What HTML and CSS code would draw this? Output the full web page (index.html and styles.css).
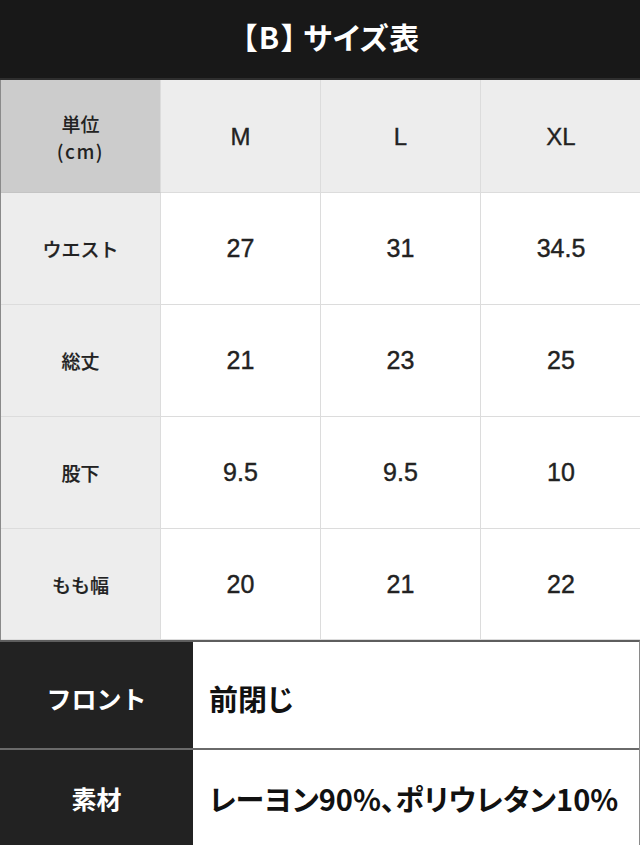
FILE: index.html
```html
<!DOCTYPE html>
<html lang="ja">
<head>
<meta charset="utf-8">
<title>サイズ表</title>
<link rel="stylesheet" href="styles.css">
</head>
<body>
<div class="page">
  <header class="title-bar"><h1 class="title"><span class="tag">【B】</span>サイズ表</h1></header>
  <div class="size-table">
    <div class="cell unit"><div>単位<br><span class="cm">(cm)</span></div></div>
    <div class="cell head">M</div>
    <div class="cell head">L</div>
    <div class="cell head">XL</div>

    <div class="cell label">ウエスト</div>
    <div class="cell num">27</div>
    <div class="cell num">31</div>
    <div class="cell num">34.5</div>

    <div class="cell label">総丈</div>
    <div class="cell num">21</div>
    <div class="cell num">23</div>
    <div class="cell num">25</div>

    <div class="cell label">股下</div>
    <div class="cell num">9.5</div>
    <div class="cell num">9.5</div>
    <div class="cell num">10</div>

    <div class="cell label">もも幅</div>
    <div class="cell num">20</div>
    <div class="cell num">21</div>
    <div class="cell num">22</div>
  </div>
  <div class="info">
    <div class="info-row first">
      <div class="info-key">フロント</div>
      <div class="info-val">前閉じ</div>
    </div>
    <div class="info-row">
      <div class="info-key">素材</div>
      <div class="info-val tight">レーヨン90%、ポリウレタン10%</div>
    </div>
  </div>
</div>
</body>
</html>
```

FILE: styles.css
```css
* { box-sizing: border-box; }
html, body { margin: 0; padding: 0; background: #fff; }
body {
  font-family: "Noto Sans CJK JP", "Noto Sans", sans-serif;
  color: #222;
}
.page { width: 640px; height: 845px; overflow: hidden; }

.title-bar {
  height: 80px;
  background: #181818;
  border-bottom: 2px solid #2e2e2e;
  display: flex;
  align-items: center;
  justify-content: center;
  padding-bottom: 6px;
}
.title {
  margin: 0;
  color: #fff;
  font-size: 30px;
  font-weight: 700;
  line-height: 1;
  font-feature-settings: "palt";
  letter-spacing: 0.8px;
  padding-left: 22px;
}
.tag { margin-right: 5px; letter-spacing: 2px; }

.size-table {
  display: grid;
  grid-template-columns: 160px 160px 160px 160px;
  grid-template-rows: 113px 112px 112px 112px 111px;
  border-left: 1px solid #8a8a8a;
  border-right: 1px solid #8a8a8a;
}
.cell {
  display: flex;
  align-items: center;
  justify-content: center;
  text-align: center;
  border-right: 1px solid #dcdcdc;
  border-bottom: 1px solid #dcdcdc;
  background: #fff;
}
.cell:nth-child(4n) { border-right: none; }
.unit {
  background: #cccccc;
  font-size: 19px;
  font-weight: 500;
  line-height: 27px;
  padding-top: 2px;
  border-bottom-color: #c4c4c4;
}
.cm { letter-spacing: 1.5px; }
.head {
  background: #ededed;
  font-family: "Liberation Sans", "Noto Sans CJK JP", sans-serif;
  font-size: 24px;
  padding-top: 2px;
  -webkit-text-stroke: 0.35px #222;
}
.label {
  background: #ededed;
  font-size: 19px;
  font-weight: 500;
  -webkit-text-stroke: 0.2px #222;
}
.num {
  font-family: "Liberation Sans", "Noto Sans CJK JP", sans-serif;
  font-size: 25px;
  -webkit-text-stroke: 0.4px #222;
}

.info {
  border-top: 2px solid #5e5e5e;
  border-right: 1px solid #8a8a8a;
}
.info-row {
  display: grid;
  grid-template-columns: 193px 1fr;
  height: 97px;
  border-top: 2px solid #6a6a6a;
}
.info-row.first { height: 106px; border-top: none; }
.info-key {
  background: #222;
  color: #fff;
  font-size: 25px;
  font-weight: 700;
  display: flex;
  align-items: center;
  justify-content: center;
  padding-top: 6px;
}
.info-row + .info-row .info-key,
.info-row + .info-row .info-val { padding-top: 0; }
.info-val {
  display: flex;
  align-items: center;
  padding-left: 16px;
  padding-top: 6px;
  font-size: 29px;
  font-weight: 700;
  color: #111;
  font-feature-settings: "palt";
}
.info-val.tight { white-space: nowrap; letter-spacing: 0; }
```
